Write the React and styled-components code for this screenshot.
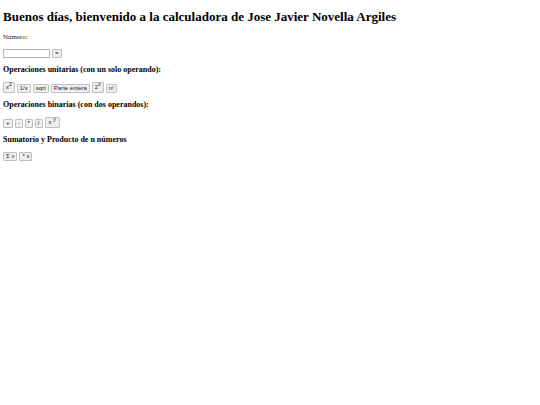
import React from "react";
import styled, { createGlobalStyle } from "styled-components";

const GlobalStyle = createGlobalStyle`
  body {
    margin: 0;
    background: #fff;
    color: #000;
    font-family: "Liberation Serif", "Times New Roman", serif;
  }
`;

const Page = styled.main`
  padding: 9px 3px;
`;

const Title = styled.h1`
  margin: 0 0 8px;
  font-size: 13px;
  line-height: 16px;
`;

const Subtitle = styled.h3`
  margin: 7px 0;
  font-size: 8px;
  line-height: 10px;
`;

const Label = styled.label`
  display: block;
  margin-bottom: 7px;
  color: #222;
  font-size: 7px;
  line-height: 9px;
`;

const Row = styled.div`
  display: flex;
  align-items: flex-end;
  gap: 2px;
`;

const Input = styled.input`
  box-sizing: border-box;
  width: 47px;
  height: 9px;
  padding: 0 1px;
  border: 1px solid #b4b4b4;
  font-family: "Liberation Sans", Arial, sans-serif;
  font-size: 6px;
`;

const Button = styled.button`
  box-sizing: border-box;
  height: ${({ $tall }) => ($tall ? "11px" : "9px")};
  padding: 0 ${({ $wide }) => ($wide ? "3px" : "2px")};
  border: 1px solid #c0c0c0;
  border-radius: 1px;
  background: #efefef;
  color: #222;
  font-family: "Liberation Sans", Arial, sans-serif;
  font-size: 6px;
  line-height: 7px;
  white-space: nowrap;

  sup {
    font-size: 5px;
    line-height: 0;
  }
`;

export default function App() {
  return (
    <Page>
      <GlobalStyle />
      <Title>
        Buenos días, bienvenido a la calculadora de Jose Javier Novella Argiles
      </Title>

      <Label htmlFor='numero'>Número:</Label>
      <Row>
        <Input type='text' id='numero' />
        <Button type='button'>=</Button>
      </Row>

      <Subtitle>Operaciones unitarias (con un solo operando):</Subtitle>
      <Row>
        <Button type='button' $tall>
          x<sup>2</sup>
        </Button>
        <Button type='button'>1/x</Button>
        <Button type='button'>sqrt</Button>
        <Button type='button'>Parte entera</Button>
        <Button type='button' $tall>
          2<sup>x</sup>
        </Button>
        <Button type='button'>n!</Button>
      </Row>

      <Subtitle>Operaciones binarias (con dos operandos):</Subtitle>
      <Row>
        <Button type='button'>+</Button>
        <Button type='button'>-</Button>
        <Button type='button'>*</Button>
        <Button type='button'>/</Button>
        <Button type='button' $tall $wide>
          x <sup>y</sup>
        </Button>
      </Row>

      <Subtitle>Sumatorio y Producto de n números</Subtitle>
      <Row>
        <Button type='button'>Σ x</Button>
        <Button type='button'>* x</Button>
      </Row>
    </Page>
  );
}
